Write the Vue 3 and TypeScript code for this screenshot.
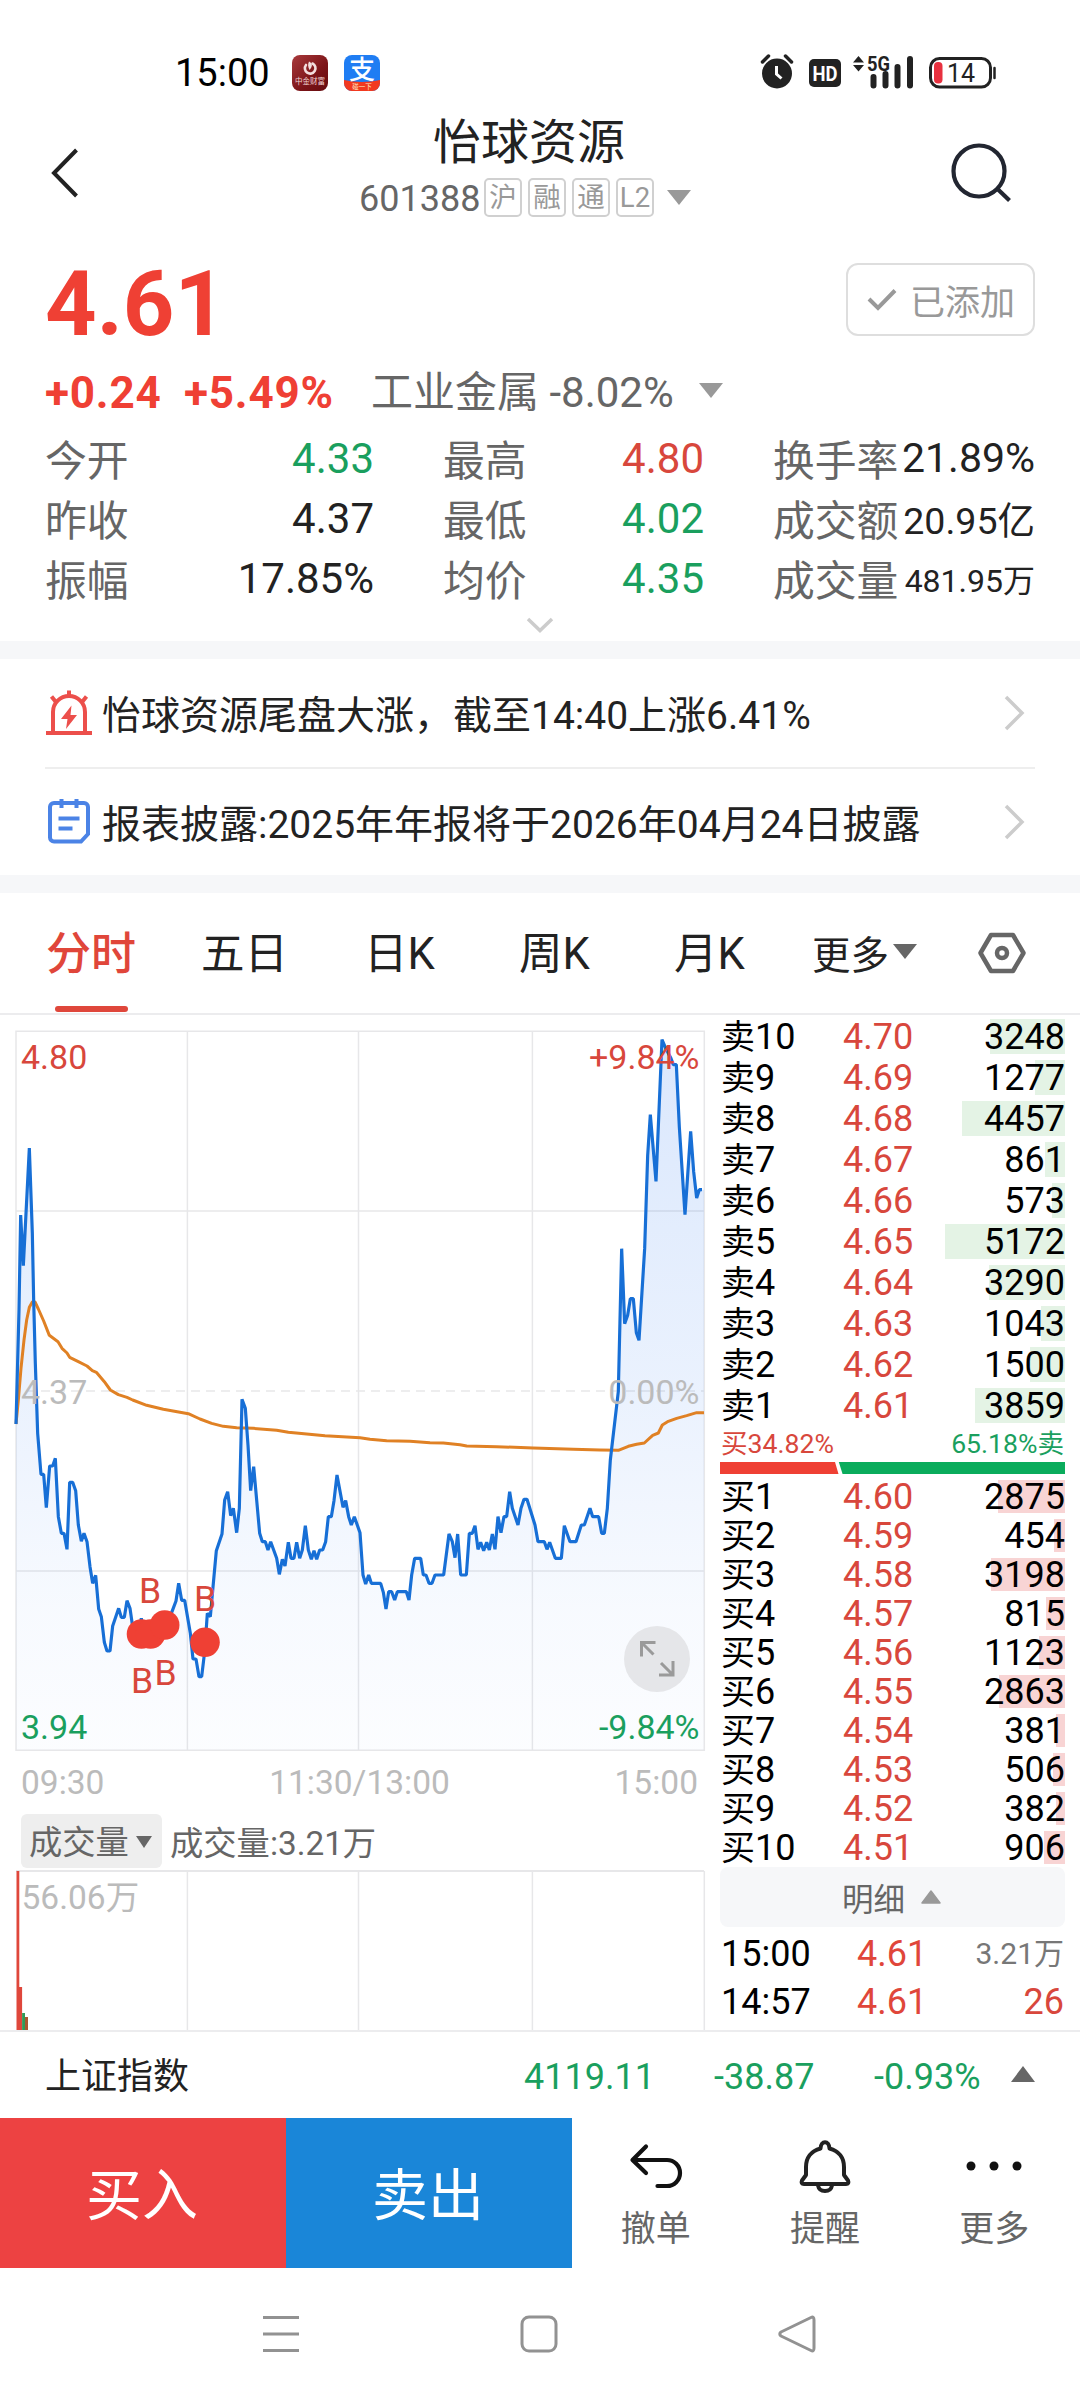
<script setup lang="ts">
interface Stat {
  label: string
  value: string
  tone: 'up' | 'down' | 'flat'
  size?: 'l' | 'm' | 's'
}
interface Level {
  name: string
  price: string
  qty: number
}

const tags: string[] = ['沪', '融', '通', 'L2']

const stats: Stat[] = [
  { label: '今开', value: '4.33', tone: 'down' },
  { label: '最高', value: '4.80', tone: 'up' },
  { label: '换手率', value: '21.89%', tone: 'flat', size: 'l' },
  { label: '昨收', value: '4.37', tone: 'flat' },
  { label: '最低', value: '4.02', tone: 'down' },
  { label: '成交额', value: '20.95亿', tone: 'flat', size: 'm' },
  { label: '振幅', value: '17.85%', tone: 'flat' },
  { label: '均价', value: '4.35', tone: 'down' },
  { label: '成交量', value: '481.95万', tone: 'flat', size: 's' },
]

const tabs: string[] = ['分时', '五日', '日K', '周K', '月K']

const sellQty = [3248, 1277, 4457, 861, 573, 5172, 3290, 1043, 1500, 3859]
const buyQty = [2875, 454, 3198, 815, 1123, 2863, 381, 506, 382, 906]
const maxQty = Math.max(...sellQty, ...buyQty)
const sells: Level[] = sellQty.map((qty, i) => ({ name: `${10 - i}`, price: (4.7 - i * 0.01).toFixed(2), qty }))
const buys: Level[] = buyQty.map((qty, i) => ({ name: `${i + 1}`, price: (4.6 - i * 0.01).toFixed(2), qty }))
const barWidth = (qty: number): string => `${(qty / maxQty) * 120}px`

// Series points are x,y pairs in thirds of a pixel; y = 0 sits 385px below the top of the chart area.
const priceLine =
  '48,72 57,-270 62,-555 70,-403 88,-756 97,-500 101,-300 106,-110 113,100 123,223 131,223 139,323 149,198 158,198 166,175 175,350 184,400 192,400 201,448 209,247 218,247 227,272 235,375 244,424 252,400 261,425 270,500 278,550 287,526 296,627 304,650 313,727 321,753 330,753 338,678 356,625 364,652 373,652 381,602 390,625 398,680 416,700 424,655 433,700 452,680 494,675 516,635 528,603 536,550 545,601 554,601 571,700 579,777 588,777 597,830 605,830 614,755 622,640 631,650 640,550 649,452 666,402 674,300 683,275 692,347 700,325 710,398 718,325 726,-2 736,25 744,135 752,272 761,200 779,400 787,425 796,425 804,450 812,425 830,475 838,523 847,478 855,498 865,427 873,475 882,475 890,427 899,475 907,450 916,377 925,450 934,478 942,452 950,478 959,450 968,450 977,425 985,350 994,350 1002,302 1011,225 1029,322 1037,302 1046,350 1054,375 1063,350 1080,398 1089,525 1097,552 1106,525 1114,550 1142,550 1150,577 1158,627 1166,575 1175,575 1184,600 1192,575 1219,575 1227,600 1235,525 1244,475 1262,475 1270,525 1278,525 1287,550 1296,550 1305,525 1331,525 1347,402 1357,425 1365,473 1373,402 1382,525 1399,525 1408,400 1417,400 1425,377 1434,448 1442,427 1451,452 1460,427 1468,450 1477,402 1485,448 1494,350 1503,398 1512,350 1520,350 1529,275 1537,325 1554,375 1563,325 1572,298 1581,298 1605,375 1614,425 1633,425 1641,448 1649,427 1666,475 1684,475 1693,377 1710,425 1728,425 1744,375 1753,375 1770,325 1778,350 1796,350 1805,400 1813,400 1822,325 1831,180 1855,-26 1865,-454 1874,-229 1883,-254 1891,-304 1900,-304 1909,-202 1917,-179 1934,-454 1943,-733 1951,-856 1968,-656 1986,-1081 1995,-1060 2012,-1027 2020,-1006 2029,-1006 2038,-819 2055,-556 2072,-806 2081,-685 2090,-606 2098,-631 2106,-631'
const averageLine =
  '48,72 55,0 63,-95 72,-180 80,-240 88,-278 97,-294 105,-294 115,-273 131,-237 148,-194 174,-175 186,-155 201,-141 209,-128 235,-115 261,-102 277,-88 289,-83 313,-55 331,-30 355,-16 381,-8 398,0 440,16 490,28 565,41 600,57 635,70 670,79 710,83 760,85 830,91 865,97 920,102 975,107 1080,113 1110,118 1160,122 1230,124 1290,128 1330,129 1380,134 1400,138 1490,140 1600,144 1720,148 1800,150 1855,151 1885,139 1910,133 1933,129 1958,106 1975,99 1987,75 2005,64 2030,55 2060,47 2090,38 2112,38'
const areaShape = `48,1050 ${priceLine} 2112,-631 2112,1050`
</script>

<template>
  <div class="screen">
    <header class="status">
      <div class="status-left">
        <span class="clock">15:00</span>
        <svg class="app" width="36" height="36" viewBox="0 0 36 36">
          <defs>
            <linearGradient id="wine" x1="0" y1="0" x2="1" y2="1">
              <stop offset="0" stop-color="#a93a3c" /><stop offset=".6" stop-color="#7c1418" /><stop offset="1" stop-color="#640c10" />
            </linearGradient>
          </defs>
          <rect width="36" height="36" rx="8" fill="url(#wine)" />
          <path d="M20.500 8.500a5.300 5.300 0 1 1-6.500 1.500" fill="none" stroke="#f3dede" stroke-width="2.600" stroke-linecap="round" />
          <path d="M17 6.500c4 2 3.500 5 .5 8.500-1.500-3-2-5.500-.5-8.500z" fill="#f3dede" />
          <text x="18" y="28.500" text-anchor="middle" font-size="7.500" fill="#f0d4d4">中金财富</text>
        </svg>
        <svg class="app" width="36" height="36" viewBox="0 0 36 36">
          <defs><clipPath id="tile"><rect width="36" height="36" rx="8" /></clipPath></defs>
          <g clip-path="url(#tile)">
            <rect width="36" height="36" fill="#1f7df3" />
            <path d="M0 25Q18 29 36 25V36H0z" fill="#f2391f" />
            <text x="18" y="24" text-anchor="middle" font-size="26" font-weight="500" fill="#fff">支</text>
            <text x="18" y="34" text-anchor="middle" font-size="6.500" fill="#ffe9c0">碰一下</text>
          </g>
        </svg>
      </div>
      <svg class="status-right" width="240" height="40" viewBox="760 52 240 40">
        <path d="M762.500 62l6-6M791.500 62l-6-6" stroke="#222" stroke-width="3.500" stroke-linecap="round" />
        <circle cx="777" cy="73.500" r="15" fill="#222" />
        <path d="M776.500 66v8l5 4.500" fill="none" stroke="#fff" stroke-width="3" />
        <rect x="809" y="59" width="32" height="28" rx="5" fill="#222" />
        <text x="825" y="80.500" text-anchor="middle" font-size="21" font-weight="700" fill="#fff" textLength="25" lengthAdjust="spacingAndGlyphs">HD</text>
        <path d="M853 62.500l5.500-6.500 5.500 6.500zM853 65l5.500 6.500 5.500-6.500z" fill="#222" />
        <text x="867" y="70.500" font-size="21" font-weight="700" fill="#222" textLength="23" lengthAdjust="spacingAndGlyphs">5G</text>
        <path d="M873.500 77v8.500M885.500 74v11.500M897.500 67v18.500M910 59v26.500" stroke="#222" stroke-width="6" stroke-linecap="round" />
        <rect x="930.500" y="58.500" width="60" height="28.500" rx="9" fill="none" stroke="#222" stroke-width="3" />
        <rect x="934" y="62" width="8.500" height="21.500" rx="4" fill="#e8313f" />
        <text x="961" y="81.500" text-anchor="middle" font-size="25" fill="#222">14</text>
        <path d="M994.500 68v10" stroke="#222" stroke-width="2.500" stroke-linecap="round" />
      </svg>
    </header>

    <nav class="title-bar">
      <svg class="back" width="40" height="56" viewBox="44 145 40 56"><path d="M76.500 150L54 173l22.500 23" fill="none" stroke="#222" stroke-width="4" /></svg>
      <div class="title-mid">
        <h1>怡球资源</h1>
        <div class="sub">
          <span class="code">601388</span>
          <span v-for="t in tags" :key="t" class="tag">{{ t }}</span>
          <i class="tri down sub-tri"></i>
        </div>
      </div>
      <svg class="search" width="64" height="64" viewBox="948 140 64 64"><g fill="none" stroke="#222631" stroke-width="4.200"><circle cx="979" cy="171" r="25.500" /><path d="M997 188.500l12.500 12" /></g></svg>
    </nav>

    <section class="quote">
      <div class="price-row">
        <strong class="price up">4.61</strong>
        <div class="added">
          <svg width="32" height="28" viewBox="0 0 32 28"><path d="M3 13l9 9L29 4.500" fill="none" stroke="#999" stroke-width="4" /></svg>
          <span>已添加</span>
        </div>
      </div>
      <div class="change-row">
        <b class="up chg">+0.24</b><b class="up pct">+5.49%</b>
        <span class="industry">工业金属 -8.02%</span>
        <i class="tri down"></i>
      </div>
      <div class="stats">
        <div v-for="s in stats" :key="s.label" class="stat">
          <span class="stat-label">{{ s.label }}</span>
          <span :class="['stat-value', s.tone, s.size]">{{ s.value }}</span>
        </div>
      </div>
      <svg class="fold" width="30" height="18" viewBox="0 0 30 18"><path d="M3 3l12 11.500L27 3" fill="none" stroke="#ccc" stroke-width="3.500" /></svg>
    </section>
    <div class="strip"></div>

    <section class="news">
      <div class="news-row">
        <svg width="48" height="50" viewBox="45 687 48 50">
          <g fill="none" stroke="#ec4f4b" stroke-width="4">
            <path d="M53 731v-20a16 16 0 0 1 32 0v20" /><path d="M46 732h46" /><path d="M69 689.500v6M51.500 695.500l4 5M86.500 695.500l-4 5" />
          </g>
          <path d="M71.500 704.500L61 718h6.500l-1.500 10 11-14h-6.500z" fill="#ec4f4b" />
        </svg>
        <span class="news-text">怡球资源尾盘大涨，截至14:40上涨6.41%</span>
        <svg class="more" width="22" height="38" viewBox="0 0 22 38"><path d="M3 3l16 16L3 35" fill="none" stroke="#ccc" stroke-width="3.500" /></svg>
      </div>
      <div class="news-row second">
        <svg width="48" height="50" viewBox="45 798 48 50">
          <g fill="none" stroke="#4b83e6" stroke-width="4">
            <path d="M55 804h29a4 4 0 0 1 4 4v27l-7 7.500H54a4 4 0 0 1-4-4V808a4 4 0 0 1 4-4z" /><path d="M61.500 800v9M76.500 800v9" /><path d="M58.500 819.500h21M58.500 829.500h14" />
          </g>
        </svg>
        <span class="news-text">报表披露:2025年年报将于2026年04月24日披露</span>
        <svg class="more" width="22" height="38" viewBox="0 0 22 38"><path d="M3 3l16 16L3 35" fill="none" stroke="#ccc" stroke-width="3.500" /></svg>
      </div>
    </section>
    <div class="strip"></div>

    <nav class="tabs">
      <span v-for="(t, i) in tabs" :key="t" :class="['tab', { active: i === 0 }]">{{ t }}</span>
      <span class="tab-more"><span>更多</span><i class="tri down dark"></i></span>
      <svg width="52" height="46" viewBox="976 929 52 46"><g fill="none" stroke="#666" stroke-width="4.500"><path d="M991 934h22l10.500 18L1013 970h-22l-10.500-18z" stroke-linejoin="round" /><circle cx="1002" cy="952" r="5" /></g></svg>
    </nav>

    <main class="market">
      <div class="charts">
        <svg class="chart" width="720" height="744" viewBox="0 1015 720 744">
          <defs>
            <linearGradient id="fill" gradientUnits="userSpaceOnUse" x1="0" y1="-1080" x2="0" y2="1050">
              <stop offset="0" stop-color="#1b6cf0" stop-opacity=".16" /><stop offset=".5" stop-color="#1b6cf0" stop-opacity=".09" /><stop offset=".8" stop-color="#1b6cf0" stop-opacity=".035" /><stop offset="1" stop-color="#1b6cf0" stop-opacity=".015" />
            </linearGradient>
          </defs>
          <g fill="none" stroke="#e7e7e9" stroke-width="1.500">
            <path d="M16 1031.300H704.300V1750.300H16z" />
            <path d="M187.400 1031V1750M358.500 1031V1750M532.400 1031V1750M16 1211H704M16 1571H704" />
            <path d="M26 1391H704" stroke-dasharray="9 6" />
          </g>
          <g transform="translate(0 1400) scale(.33333)">
            <polygon :points="areaShape" fill="url(#fill)" />
            <polyline :points="averageLine" fill="none" stroke="#e08124" stroke-width="9" stroke-linejoin="round" />
            <polyline :points="priceLine" fill="none" stroke="#176fd6" stroke-width="9.500" stroke-linejoin="bevel" />
          </g>
          <g fill="#ef4034">
            <circle cx="141.500" cy="1634" r="14.800" /><circle cx="150.500" cy="1634" r="14.800" /><circle cx="164.700" cy="1625" r="14.800" /><circle cx="205" cy="1642.300" r="14.800" />
          </g>
          <g font-size="35.500" fill="#d8473c" text-anchor="middle">
            <text x="150" y="1602.500">B</text><text x="205" y="1610.500">B</text><text x="142" y="1692.500">B</text><text x="165.500" y="1685">B</text>
          </g>
          <g font-size="34">
            <text x="21" y="1069" fill="#d8473c">4.80</text>
            <text x="21" y="1404" fill="#bbb">4.37</text>
            <text x="21" y="1739" fill="#1a9f5e">3.94</text>
            <g text-anchor="end">
              <text x="699.500" y="1069" fill="#d8473c">+9.84%</text>
              <text x="699.500" y="1404" fill="#bbb">0.00%</text>
              <text x="699.500" y="1739" fill="#1a9f5e">-9.84%</text>
            </g>
          </g>
          <circle cx="657" cy="1659" r="33" fill="#e5e6e9" />
          <path d="M641.500 1656.500V1642.500H655.500M642 1643l11.500 11.500M673 1661V1675H659M672.500 1674.500L661 1663" fill="none" stroke="#9a9a9a" stroke-width="3" />
        </svg>
        <div class="axis"><span>09:30</span><span>11:30/13:00</span><span>15:00</span></div>
        <div class="vol-head">
          <span class="chip"><span>成交量</span><i class="tri down small"></i></span>
          <span>成交量:3.21万</span>
        </div>
        <svg class="volume" width="720" height="160" viewBox="0 1870 720 160">
          <path d="M187.400 1871V2031M358.500 1871V2031M532.400 1871V2031M704.300 1871V2031" fill="none" stroke="#e7e7e9" stroke-width="1.500" />
          <path d="M16 1871H704" stroke="#e7e7e9" stroke-width="2" />
          <path d="M16.500 1871h2.800v160h-2.800zM19.300 1987h2.800v44h-2.800z" fill="#df473b" />
          <path d="M22.100 2013h2.900v18h-2.900z" fill="#2f9b58" />
          <path d="M25 2017h3v14h-3z" fill="#a9582f" />
          <text x="21.500" y="1909" font-size="33.500" fill="#bbb">56.06万</text>
        </svg>
      </div>

      <aside class="book">
        <div v-for="r in sells" :key="r.name" class="level sell">
          <span class="name"><em>卖</em>{{ r.name }}</span><span class="lp">{{ r.price }}</span>
          <span class="qty"><i class="depth" :style="{ width: barWidth(r.qty) }"></i><b>{{ r.qty }}</b></span>
        </div>
        <div class="ratio"><span class="r">买34.82%</span><span class="g">65.18%卖</span></div>
        <svg class="ratio-bar" width="345" height="12" viewBox="0 0 345 12"><path d="M0 0H115L118.500 12H0z" fill="#ef4034" /><path d="M118.800 0H345V12H122.600z" fill="#0aac5c" /></svg>
        <div v-for="r in buys" :key="r.name" class="level buy">
          <span class="name"><em>买</em>{{ r.name }}</span><span class="lp">{{ r.price }}</span>
          <span class="qty"><i class="depth" :style="{ width: barWidth(r.qty) }"></i><b>{{ r.qty }}</b></span>
        </div>
        <div class="detail">明细<svg width="20" height="14" viewBox="0 0 20 14"><path d="M10 1L19 13H1z" fill="#999" stroke="#999" stroke-width="1.500" stroke-linejoin="round" /></svg></div>
        <div class="tick"><span>15:00</span><span class="tp">4.61</span><span class="tq grey">3.21万</span></div>
        <div class="tick"><span>14:57</span><span class="tp">4.61</span><span class="tq">26</span></div>
      </aside>
    </main>

    <div class="index">
      <span class="index-name">上证指数</span>
      <span class="i1">4119.11</span><span class="i2">-38.87</span><span class="i3">-0.93%</span>
      <i class="tri up-tri"></i>
    </div>

    <footer class="actions">
      <button class="buy-btn">买入</button>
      <button class="sell-btn">卖出</button>
      <div class="act">
        <svg width="60" height="56" viewBox="626 2138 60 56"><path d="M646 2146.500L632.500 2160 646 2173M633 2160H667a13 13 0 0 1 0 26H657.500" fill="none" stroke="#111" stroke-width="4.200" stroke-linecap="round" stroke-linejoin="round" /></svg>
        <span>撤单</span>
      </div>
      <div class="act">
        <svg width="60" height="56" viewBox="794 2138 60 56"><g fill="none" stroke="#222" stroke-width="4" stroke-linejoin="round"><path d="M819.500 2148.500C820 2140 828 2140 828.500 2148.500C838 2151 843 2158 843 2167V2175L847 2180.500Q848.500 2184 845 2184H803Q799.500 2184 801 2180.500L805 2175V2167C805 2158 810 2151 819.500 2148.500z" /><path d="M817 2185.500Q818 2191 824 2191T831 2185.500" /></g></svg>
        <span>提醒</span>
      </div>
      <div class="act">
        <svg width="60" height="56" viewBox="965 2138 60 56"><g fill="#111"><circle cx="972" cy="2166" r="4.500" /><circle cx="995" cy="2166" r="4.500" /><circle cx="1018" cy="2166" r="4.500" /></g></svg>
        <span>更多</span>
      </div>
    </footer>

    <div class="sys">
      <svg width="40" height="40" viewBox="0 0 40 40"><path d="M2 3.500H38M2 20H38M2 36.500H38" stroke="#929292" stroke-width="3" /></svg>
      <svg width="40" height="40" viewBox="0 0 40 40"><rect x="3" y="3" width="34" height="34" rx="7" fill="none" stroke="#929292" stroke-width="3" /></svg>
      <svg width="40" height="40" viewBox="0 0 40 40"><path d="M34 3.500Q37 2 37 6V34Q37 38 34 36.500L4 22Q1.500 20 4 18z" fill="none" stroke="#929292" stroke-width="3" stroke-linejoin="round" /></svg>
    </div>
  </div>
</template>

<style>
body {
  margin: 0;
  background: #fff;
}
</style>

<style scoped>
.screen {
  width: 1080px;
  height: 2400px;
  overflow: hidden;
  background: #fff;
  color: #222;
  font-family: Roboto, "Noto Sans CJK SC", sans-serif;
  display: flex;
  flex-direction: column;
}
.screen > * {
  flex: none;
}
.screen svg {
  display: block;
  flex: none;
}
.screen * {
  box-sizing: border-box;
}
.up { color: #ef4034; }
.down { color: #1a9f5e; }
.flat { color: #222; }
.tri {
  display: block;
  flex: none;
  border: 12px solid transparent;
  border-bottom: 0;
  border-top: 15px solid #999;
}
.tri.dark { border-top-color: #666; }
.status {
  height: 110px;
  display: flex;
  justify-content: space-between;
  padding: 52px 80px 0 175px;
}
.status-left {
  display: flex;
  height: 42px;
  align-items: center;
}
.clock {
  width: 117px;
  font-size: 38px;
  color: #000;
  line-height: 42px;
}
.app { margin-right: 16px; }
.title-bar {
  height: 134px;
  display: flex;
  justify-content: space-between;
  padding: 0 68px 0 44px;
}
.back { margin-top: 35px; }
.search { margin-top: 30px; }
.title-mid {
  flex: 1;
  display: flex;
  flex-direction: column;
  align-items: flex-start;
  padding: 2px 0 0 275px;
}
h1 {
  margin: 0 0 0 74px;
  font-size: 48px;
  font-weight: 400;
  line-height: 62px;
}
.sub {
  display: flex;
  align-items: center;
  height: 49px;
}
.code {
  width: 125px;
  font-size: 36px;
  color: #666;
}
.tag {
  width: 38px;
  height: 39px;
  margin-right: 6px;
  margin-top: -2px;
  border: 2px solid #d0d0d0;
  border-radius: 5px;
  font-size: 27.500px;
  line-height: 35px;
  color: #999;
  display: flex;
  justify-content: center;
}
.sub-tri { margin-left: 7px; margin-top: -3px; }
.quote {
  height: 397px;
  padding: 19px 45px 0;
  display: flex;
  flex-direction: column;
}
.price-row {
  display: flex;
  justify-content: space-between;
  height: 98px;
}
.price {
  font-size: 90px;
  line-height: 83px;
  font-weight: 700;
}
.added {
  width: 189px;
  height: 73px;
  border: 2px solid #dedede;
  border-radius: 12px;
  display: flex;
  align-items: center;
  padding-left: 18px;
  gap: 12px;
  font-size: 35px;
  color: #999;
}
.change-row {
  display: flex;
  align-items: center;
  height: 64px;
  line-height: 66px;
  font-size: 42px;
}
.change-row b {
  font-size: 44px;
  letter-spacing: 0.800px;
}
.chg { width: 139px; }
.pct { width: 187px; }
.industry {
  color: #666;
  width: 328px;
  white-space: nowrap;
}
.change-row .tri { margin-top: -5px; }
.stats {
  display: grid;
  grid-template-columns: 329px 261px 262px;
  column-gap: 69px;
  grid-auto-rows: 60px;
  margin-top: 3px;
}
.stat {
  display: flex;
  justify-content: space-between;
  align-items: center;
  white-space: nowrap;
}
.stat-label { font-size: 41.800px; color: #666; margin-top: -1px; }
.stat-value { font-size: 42px; }
.stat-value.up { color: #d8473c; }
.stat-value.l { font-size: 41px; }
.stat-value.m { font-size: 37.500px; margin-top: -2px; }
.stat-value.s { font-size: 32px; margin-top: -1px; }
.fold { margin: 8px auto 0; }
.strip { height: 18px; background: #f6f7f9; }
.news {
  height: 216px;
  padding: 0 45px;
}
.news-row {
  height: 108px;
  display: flex;
  align-items: center;
  padding-right: 10px;
}
.news-row.second {
  border-top: 2px solid #eee;
}
.news-text {
  flex: 1;
  margin: -2px 0 0 9px;
  font-size: 39px;
  white-space: nowrap;
}
.tabs {
  height: 122px;
  padding-left: 12px;
  display: flex;
  align-items: center;
  border-bottom: 2px solid #ececee;
}
.tab {
  width: 155px;
  height: 120px;
  display: flex;
  justify-content: center;
  position: relative;
  font-size: 43.500px;
  line-height: 124px;
}
.tab.active { color: #e0463a; font-weight: 500; font-size: 45px; padding-left: 3px; }
.tab.active::after {
  content: "";
  position: absolute;
  bottom: 1px;
  left: 43px;
  width: 73px;
  height: 6px;
  border-radius: 3px;
  background: #df473b;
}
.tab-more {
  display: flex;
  align-items: center;
  margin-left: 25px;
  width: 164px;
  font-size: 38.500px;
  gap: 4px;
}
.tab-more span { margin-top: -3px; }
.tab-more .tri { margin-top: -4px; }
.market {
  height: 1017px;
  display: flex;
  border-bottom: 2px solid #ececee;
}
.charts { width: 720px; }
.axis {
  height: 55px;
  padding: 0 21px;
  width: 719px;
  display: flex;
  justify-content: space-between;
  font-size: 33.500px;
  line-height: 48px;
  color: #bbb;
}
.vol-head {
  height: 56px;
  padding-left: 21px;
  display: flex;
  gap: 8px;
  font-size: 33.300px;
  line-height: 59px;
  color: #666;
}
.chip {
  width: 141px;
  height: 54px;
  padding-left: 8px;
  display: flex;
  align-items: center;
  gap: 7px;
  border-radius: 6px;
  background: #eee;
}
.chip span { padding-top: 3px; }
.tri.small {
  border-width: 12px 8.500px 0;
  border-top-color: #666;
  margin-top: 2px;
}
.book {
  width: 345px;
  padding-top: 4px;
}
.level {
  display: flex;
  font-size: 36px;
  color: #000;
}
.level.sell { height: 35px; line-height: 37px; margin-bottom: 6px; }
.level.buy { height: 33px; line-height: 35px; margin-bottom: 6px; }
.level em { font-style: normal; font-size: 34px; }
.name { width: 123px; padding-left: 1px; }
.lp { width: 102px; color: #d8473c; }
.qty {
  width: 120px;
  display: flex;
  position: relative;
  justify-content: flex-end;
}
.qty b { position: relative; font-weight: 400; }
.depth {
  position: absolute;
  right: 0;
  top: 0;
  height: 100%;
  background: #e4f3e5;
}
.buy .depth { background: #f8d4d4; }
.ratio {
  display: flex;
  justify-content: space-between;
  height: 33px;
  padding: 0 1px;
  line-height: 30px;
  font-size: 26.600px;
}
.r { color: #d8473c; }
.g { color: #1a9f5e; }
.ratio-bar { margin-bottom: 6px; }
.detail {
  height: 60px;
  margin: -3px 0 2px;
  border-radius: 8px;
  background: #f6f7f9;
  display: flex;
  align-items: center;
  justify-content: center;
  gap: 16px;
  padding: 0 2px 0 0;
  color: #666;
  font-size: 31.500px;
}
.tick {
  display: flex;
  height: 48px;
  line-height: 50px;
  padding: 0 1px;
  font-size: 36px;
  color: #000;
}
.tp { margin-left: 48px; color: #e0463a; }
.tq { margin-left: auto; color: #d8473c; }
.tq.grey { color: #777; font-size: 30px; }
.tick span:first-child { width: 88px; }
.index {
  height: 86px;
  padding: 4px 45px 0;
  display: flex;
  align-items: center;
  font-size: 36px;
  line-height: 82px;
  color: #1a9f5e;
}
.index-name { width: 479px; color: #222; }
.i1 { width: 190px; }
.i2 { width: 160px; }
.i3 { width: 137px; }
.up-tri {
  border: 12px solid transparent;
  border-top: 0;
  border-bottom: 16px solid #666;
  margin-top: -7px;
}
.actions {
  height: 150px;
  display: flex;
}
button {
  width: 286px;
  border: 0;
  padding: 5px 2px 0 0;
  color: #fff;
  font: 400 56px/1 Roboto, "Noto Sans CJK SC", sans-serif;
}
.buy-btn { background: #ed4242; }
.sell-btn { background: #1a86d8; }
.act {
  flex: 1;
  padding: 20px 2px 0 0;
  display: flex;
  flex-direction: column;
  align-items: center;
  font-size: 35px;
  line-height: 72px;
  color: #666;
}
.sys {
  height: 132px;
  padding: 46px 263px 0 261px;
  display: flex;
  justify-content: space-between;
}
</style>
